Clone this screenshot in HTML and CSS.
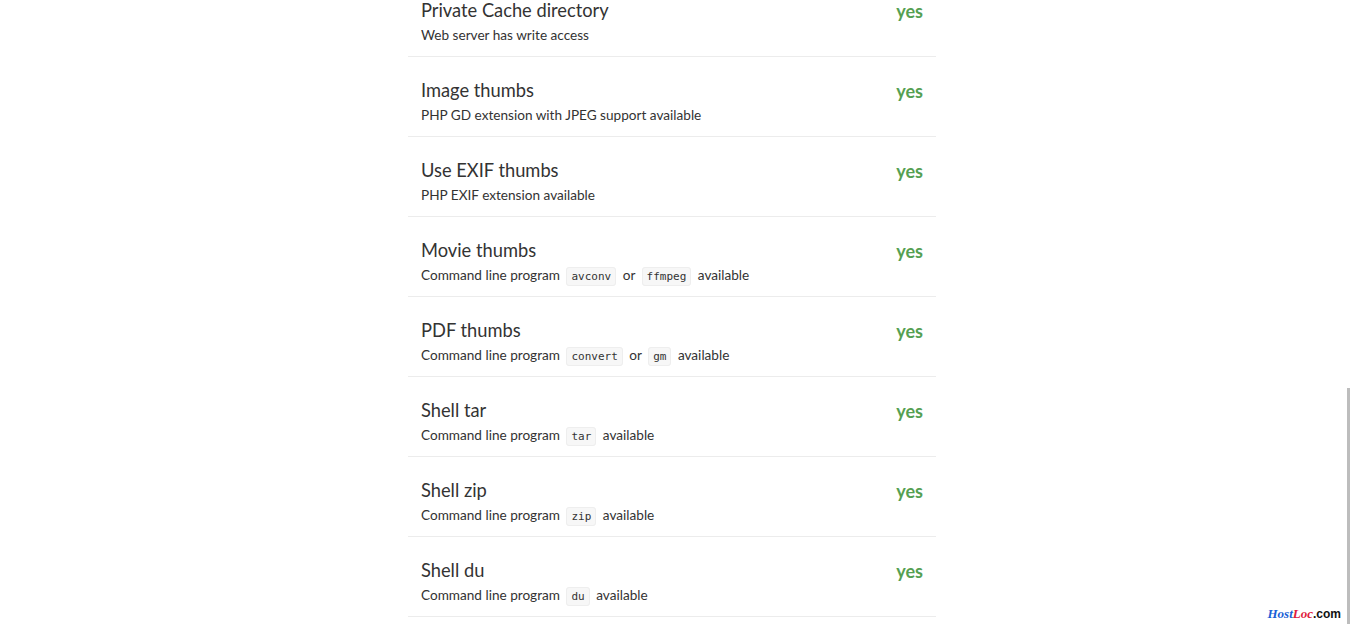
FILE: index.html
```html
<!DOCTYPE html>
<html>
<head>
<meta charset="utf-8">
<link rel="stylesheet" href="styles.css">
</head>
<body>
<div class="page">
  <ul class="checks">
    <li class="check">
      <div class="info">
        <div class="title">Private Cache directory</div>
        <div class="desc">Web server has write access</div>
      </div>
      <div class="status">yes</div>
    </li>
    <li class="check">
      <div class="info">
        <div class="title">Image thumbs</div>
        <div class="desc">PHP GD extension with JPEG support available</div>
      </div>
      <div class="status">yes</div>
    </li>
    <li class="check">
      <div class="info">
        <div class="title">Use EXIF thumbs</div>
        <div class="desc">PHP EXIF extension available</div>
      </div>
      <div class="status">yes</div>
    </li>
    <li class="check">
      <div class="info">
        <div class="title">Movie thumbs</div>
        <div class="desc">Command line program <code>avconv</code> or <code>ffmpeg</code> available</div>
      </div>
      <div class="status">yes</div>
    </li>
    <li class="check">
      <div class="info">
        <div class="title">PDF thumbs</div>
        <div class="desc">Command line program <code>convert</code> or <code>gm</code> available</div>
      </div>
      <div class="status">yes</div>
    </li>
    <li class="check">
      <div class="info">
        <div class="title">Shell tar</div>
        <div class="desc">Command line program <code>tar</code> available</div>
      </div>
      <div class="status">yes</div>
    </li>
    <li class="check">
      <div class="info">
        <div class="title">Shell zip</div>
        <div class="desc">Command line program <code>zip</code> available</div>
      </div>
      <div class="status">yes</div>
    </li>
    <li class="check">
      <div class="info">
        <div class="title">Shell du</div>
        <div class="desc">Command line program <code>du</code> available</div>
      </div>
      <div class="status">yes</div>
    </li>
  </ul>
</div>
<div class="scrollbar"><div class="thumb"></div></div>
<div class="watermark"><span class="wm-host">Host</span><span class="wm-loc">Loc</span><span class="wm-com">.com</span></div>
</body>
</html>
```

FILE: styles.css
```css
html, body {
  margin: 0;
  padding: 0;
  background: #fff;
  overflow: hidden;
}
body {
  font-family: Lato, "Open Sans", sans-serif;
  color: #333;
  height: 629px;
}
.page {
  width: 1344px;
}
.checks {
  list-style: none;
  margin: -23px auto 0;
  padding: 0;
  width: 528px;
}
.check {
  display: flex;
  justify-content: space-between;
  align-items: flex-start;
  height: 79px;
  width: 502px;
  border-bottom: 1px solid #ececec;
  padding: 0 13px;
  box-sizing: content-box;
}
.info {
  padding-top: 22px;
}
.title {
  font-size: 18.3px;
  line-height: 22px;
  color: #333;
}
.desc {
  font-size: 13.6px;
  line-height: 20px;
  margin-top: 4px;
  color: #333;
}
code {
  font-family: "DejaVu Sans Mono", monospace;
  font-size: 11px;
  background: #f7f7f7;
  border: 1px solid #eee;
  border-radius: 3px;
  padding: 2px 4px;
  margin: 0 3px;
  color: #333;
}
.status {
  padding-top: 23px;
  font-size: 18px;
  font-weight: bold;
  color: #55a052;
  line-height: 22px;
}
.scrollbar {
  position: absolute;
  top: 0;
  right: 0;
  width: 7px;
  height: 629px;
  background: #fff;
}
.thumb {
  position: absolute;
  right: 1px;
  top: 388px;
  width: 3px;
  height: 236px;
  background: #bdbdbd;
}
.watermark {
  position: absolute;
  right: 10px;
  bottom: 8px;
  font-size: 13px;
  line-height: 14px;
}
.wm-host, .wm-loc {
  font-family: "Liberation Serif", serif;
  font-style: italic;
  font-weight: bold;
}
.wm-host { color: #1a5fd6; }
.wm-loc { color: #e0203c; }
.wm-com {
  font-family: "Liberation Sans", sans-serif;
  font-weight: bold;
  color: #111;
  font-size: 12px;
}
```
